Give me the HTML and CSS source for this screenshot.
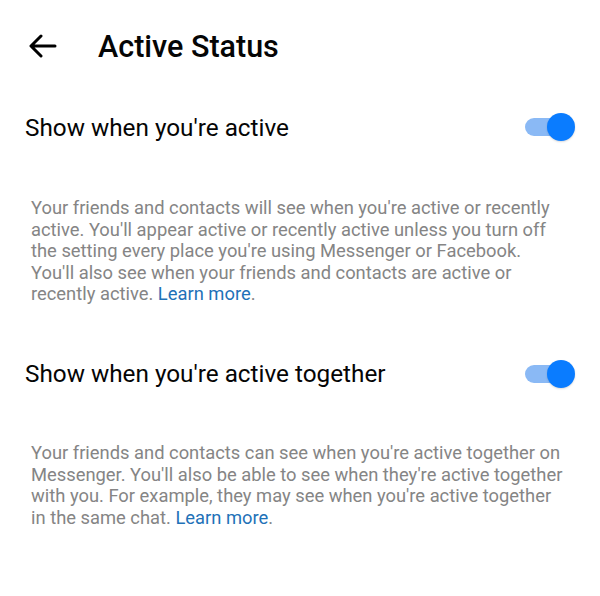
FILE: index.html
```html
<!DOCTYPE html>
<html>
<head>
<meta charset="utf-8">
<link rel="stylesheet" href="styles.css">
</head>
<body>
<header class="header">
  <svg class="back" width="28" height="24" viewBox="0 0 28 24" aria-hidden="true">
    <path d="M26 12H3 M12 2L2 12L12 22" fill="none" stroke="#000" stroke-width="3" stroke-linecap="round" stroke-linejoin="round"/>
  </svg>
  <h1 class="title">Active Status</h1>
</header>
<section class="setting">
  <div class="row">
    <span class="label">Show when you're active</span>
    <span class="toggle"><span class="knob"></span></span>
  </div>
  <p class="desc">Your friends and contacts will see when you're active or recently active. You'll appear active or recently active unless you turn off the setting every place you're using Messenger or Facebook. You'll also see when your friends and contacts are active or recently active. <a class="link">Learn more</a>.</p>
</section>
<section class="setting second">
  <div class="row">
    <span class="label">Show when you're active together</span>
    <span class="toggle"><span class="knob"></span></span>
  </div>
  <p class="desc">Your friends and contacts can see when you're active together on Messenger. You'll also be able to see when they're active together with you. For example, they may see when you're active together in the same chat. <a class="link">Learn more</a>.</p>
</section>
</body>
</html>
```
FILE: styles.css
```css
html, body {
  margin: 0;
  padding: 0;
  background: #fff;
  font-family: Roboto, "Liberation Sans", sans-serif;
}
.header {
  display: flex;
  align-items: center;
  height: 92px;
  padding-left: 29px;
}
.back {
  display: block;
  flex: none;
}
.title {
  margin: 0 0 0 41px;
  font-size: 30.5px;
  font-weight: 500;
  color: #050505;
}
.setting {
  padding: 0 25px 0 25px;
}
.row {
  display: flex;
  align-items: center;
  justify-content: space-between;
  height: 70px;
}
.label {
  font-size: 24.3px;
  color: #050505;
}
.toggle {
  position: relative;
  width: 40px;
  height: 18px;
  border-radius: 9px;
  background: #8ab9f5;
  margin-right: 10px;
}
.knob {
  position: absolute;
  right: -10px;
  top: -5px;
  width: 28px;
  height: 28px;
  border-radius: 50%;
  background: #0a7cff;
  box-shadow: 0 1px 2px rgba(0,0,0,0.15);
}
.desc {
  margin: 35px 9px 0 6px;
  font-size: 18.35px;
  line-height: 21.6px;
  color: #858585;
}
.link {
  color: #1f72b8;
}
.second {
  margin-top: 34px;
}
.second .desc {
  margin-top: 33px;
}
```
